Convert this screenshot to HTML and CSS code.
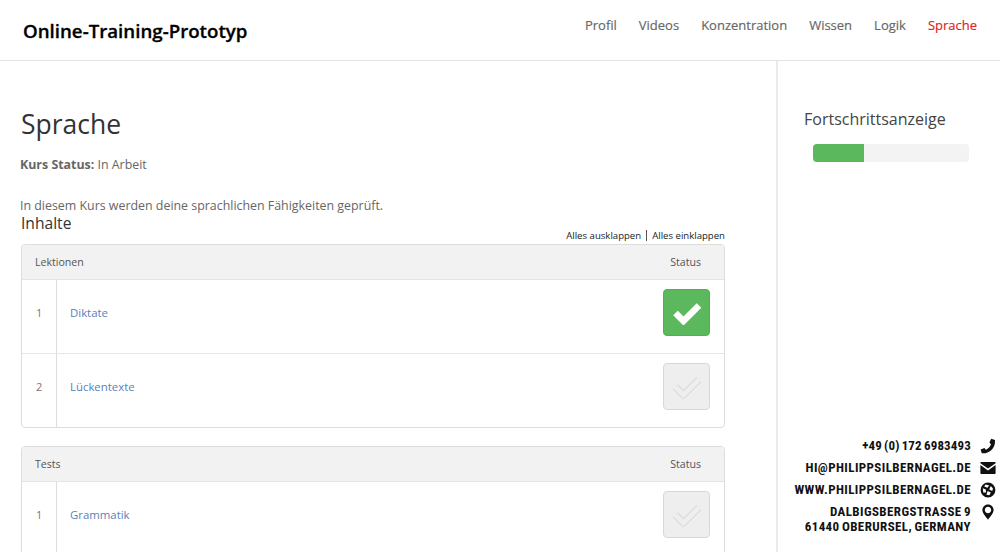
FILE: index.html
```html
<!DOCTYPE html>
<html lang="de">
<head>
  <meta charset="UTF-8" />
  <title>Sprache - Online-Training-Prototyp</title>
  <link rel="stylesheet" href="styles.css">
</head>
<body>

  <header class="topbar">
    <div class="logo">Online-Training-Prototyp</div>
    <nav class="nav">
      <a href="#">Profil</a>
      <a href="#">Videos</a>
      <a href="#">Konzentration</a>
      <a href="#">Wissen</a>
      <a href="#">Logik</a>
      <a href="#" class="active">Sprache</a>
    </nav>
  </header>

  <div class="layout">
    <main class="content">
      <h1>Sprache</h1>
      <p class="course-status"><strong>Kurs Status:</strong> In Arbeit</p>
      <p class="intro">In diesem Kurs werden deine sprachlichen Fähigkeiten geprüft.</p>
      <h2>Inhalte</h2>
      <div class="expand-links"><a href="#">Alles ausklappen</a><span class="divider"></span><a href="#">Alles einklappen</a></div>

      <div class="panel">
        <div class="row head"><div class="head-title">Lektionen</div><div class="head-status">Status</div></div>
        <div class="row">
          <div class="num">1</div>
          <div class="title"><a href="#">Diktate</a></div>
          <div class="status">
            <span class="check done"><svg viewBox="0 0 30 24"><path class="tick-outer" d="M3.5 12 L11.5 20 L27 4.5" /></svg></span>
          </div>
        </div>
        <div class="row">
          <div class="num">2</div>
          <div class="title"><a href="#">Lückentexte</a></div>
          <div class="status">
            <span class="check"><svg viewBox="0 0 30 24"><path class="tick-outer" d="M3.5 12 L11.5 20 L27 4.5" /><path class="tick-inner" d="M3.5 12 L11.5 20 L27 4.5" /></svg></span>
          </div>
        </div>
      </div>

      <div class="panel">
        <div class="row head"><div class="head-title">Tests</div><div class="head-status">Status</div></div>
        <div class="row">
          <div class="num">1</div>
          <div class="title"><a href="#">Grammatik</a></div>
          <div class="status">
            <span class="check"><svg viewBox="0 0 30 24"><path class="tick-outer" d="M3.5 12 L11.5 20 L27 4.5" /><path class="tick-inner" d="M3.5 12 L11.5 20 L27 4.5" /></svg></span>
          </div>
        </div>
      </div>
    </main>

    <aside class="sidebar">
      <h3>Fortschrittsanzeige</h3>
      <div class="progress"><div class="progress-bar" style="width: 33%"></div></div>

      <ul class="contact">
        <li>
          <span class="phone">+49 (0) 172 6983493</span>
          <svg viewBox="0 0 16 16"><path d="M11.2 .8 L15 2 C15.4 6 13.9 9.8 11.2 12.2 C8.7 14.5 5 15.7 1.8 15.2 L.6 11.6 L4.4 10 L5.9 11.7 C8.3 10.7 10.2 8.7 11 6.2 L9.4 4.6 Z" /></svg>
        </li>
        <li>
          <span>HI@PHILIPPSILBERNAGEL.DE</span>
          <svg viewBox="0 0 16 16"><path d="M1.3 2 H14.7 C15.4 2 15.6 2.6 15.6 3.2 L8 8.6 L.4 3.2 C.4 2.6 .6 2 1.3 2 Z M.4 5 L8 10.4 L15.6 5 V13 C15.6 13.6 15.2 14 14.6 14 H1.4 C.8 14 .4 13.6 .4 13 Z" /></svg>
        </li>
        <li>
          <span>WWW.PHILIPPSILBERNAGEL.DE</span>
          <svg viewBox="0 0 16 16"><path fill-rule="evenodd" d="M8 .6 A7.4 7.4 0 1 0 8 15.4 A7.4 7.4 0 1 0 8 .6 Z M5.6 2.6 L9.2 3.4 L7.4 5.8 L4.2 4.6 Z M10.8 4 L13 6.4 L12.2 9 L9.2 7.4 Z M2.8 6.2 L5.8 7.4 L6 10.4 L3.2 10.4 Z M7.6 9 L10.8 10.6 L9.4 13.2 L6.4 12.8 Z" /></svg>
        </li>
        <li class="address">
          <span>DALBIGSBERGSTRASSE 9<br>61440 OBERURSEL, GERMANY</span>
          <svg viewBox="0 0 16 16"><path fill-rule="evenodd" d="M8 .4 C4.6 .4 2.4 2.9 2.4 6 C2.4 9.4 6 12.6 8 15.8 C10 12.6 13.6 9.4 13.6 6 C13.6 2.9 11.4 .4 8 .4 Z M8 2.8 C9.8 2.8 11.2 4.2 11.2 6 C11.2 7.8 9.8 9.2 8 9.2 C6.2 9.2 4.8 7.8 4.8 6 C4.8 4.2 6.2 2.8 8 2.8 Z" /></svg>
        </li>
      </ul>
    </aside>
  </div>

</body>
</html>
```

FILE: styles.css
```css
html, body {
  height: 100%;
}
body {
  margin: 0;
  overflow: hidden;
  background: #fff;
  font-family: 'Open Sans', sans-serif;
  color: #555;
  display: flex;
  flex-direction: column;
}
a {
  text-decoration: none;
}
.topbar {
  height: 60px;
  flex: none;
  display: flex;
  justify-content: space-between;
  align-items: flex-start;
  border-bottom: 1px solid #e5e5e5;
  padding: 0 23px 0 23px;
}
.logo {
  font-size: 18.7px;
  font-weight: 600;
  color: #000;
  line-height: 26px;
  margin-top: 18px;
  -webkit-text-stroke: 0.3px #000;
}
.nav {
  display: flex;
  gap: 22px;
  margin-top: 16px;
}
.nav a {
  font-size: 13px;
  font-weight: 400;
  line-height: 18px;
  color: #666;
  -webkit-text-stroke: 0.15px #666;
}
.nav a.active {
  color: #e2231a;
  -webkit-text-stroke: 0.15px #e2231a;
}
.layout {
  flex: 1;
  min-height: 0;
  display: flex;
}
.content {
  width: 776px;
  flex: none;
  box-sizing: border-box;
  padding: 44px 51px 0 21px;
  overflow: hidden;
}
h1 {
  margin: 0;
  font-size: 26.5px;
  font-weight: 400;
  line-height: 38px;
  color: #333;
}
.course-status {
  margin: 13px 0 0 -1px;
  font-size: 12.4px;
  line-height: 18px;
  color: #666;
}
.intro {
  margin: 23px 0 0 -1px;
  font-size: 12.4px;
  line-height: 18px;
  color: #666;
}
h2 {
  margin: -2px 0 0;
  font-size: 15.6px;
  font-weight: 400;
  line-height: 20px;
  color: #333;
}
.expand-links {
  display: flex;
  justify-content: flex-end;
  align-items: center;
  font-size: 9.6px;
  line-height: 13px;
  margin: -4px 0 2px;
}
.expand-links a {
  color: #222;
}
.divider {
  width: 1px;
  height: 11px;
  background: #555;
  margin: 0 5px;
}
.panel {
  border: 1px solid #ddd;
  border-radius: 4px;
  margin-bottom: 18px;
  overflow: hidden;
}
.row {
  display: flex;
  height: 73px;
  border-top: 1px solid #e6e6e6;
}
.row.head {
  height: 34px;
  border-top: 0;
  border-bottom: 1px solid #e4e4e4;
  background: #f2f2f2;
  align-items: center;
  justify-content: space-between;
  font-size: 10.6px;
  color: #555;
}
.row.head + .row {
  border-top: 0;
}
.head-title {
  padding-left: 13px;
}
.head-status {
  width: 69px;
  box-sizing: border-box;
  padding-right: 23px;
  text-align: right;
}
.num {
  width: 35px;
  flex: none;
  box-sizing: border-box;
  border-right: 1px solid #ddd;
  padding: 25px 0 0 14px;
  font-size: 11px;
  line-height: 15px;
  color: #777;
}
.title {
  flex: 1;
  padding: 25px 0 0 13px;
  font-size: 11.4px;
  line-height: 15px;
}
.title a {
  color: #5a7fbd;
}
.status {
  width: 61px;
  flex: none;
  padding-top: 9px;
}
.check {
  width: 47px;
  height: 47px;
  box-sizing: border-box;
  display: flex;
  align-items: center;
  justify-content: center;
  border: 1px solid #d8d8d8;
  border-radius: 4px;
  background: #eee;
}
.check svg {
  width: 30px;
  height: 24px;
  fill: none;
}
.tick-outer {
  stroke: #d9d9d9;
  stroke-width: 7;
}
.tick-inner {
  stroke: #eee;
  stroke-width: 5;
}
.check.done {
  background: #5cb85c;
  border-color: #55ad55;
}
.check.done .tick-outer {
  stroke: #fff;
  stroke-width: 6.5;
}
.sidebar {
  flex: 1;
  min-width: 0;
  display: flex;
  flex-direction: column;
  border-left: 2px solid #ebebeb;
}
h3 {
  margin: 46px 0 0 26px;
  font-size: 16px;
  font-weight: 400;
  line-height: 24px;
  color: #444;
}
.progress {
  width: 156px;
  height: 18px;
  margin: 13px 0 0 35px;
  border-radius: 4px;
  background: #f3f3f3;
  overflow: hidden;
}
.progress-bar {
  height: 100%;
  background: #5cb85c;
}
.contact {
  list-style: none;
  margin: auto 0 0;
  padding: 0 4px 18px 0;
  font-family: 'Roboto Condensed', 'Liberation Sans Narrow', Roboto, sans-serif;
  font-weight: 700;
  font-size: 13px;
  line-height: 15px;
  letter-spacing: 0.4px;
  word-spacing: -1px;
  color: #111;
}
.contact li {
  display: flex;
  justify-content: flex-end;
  align-items: flex-start;
  text-align: right;
  margin-bottom: 6px;
  white-space: nowrap;
}
.contact li:last-child {
  margin-bottom: 0;
}
.contact .phone {
  letter-spacing: 0.15px;
}
.contact svg {
  width: 16px;
  height: 16px;
  flex: none;
  margin-left: 9px;
  fill: #111;
}
```
